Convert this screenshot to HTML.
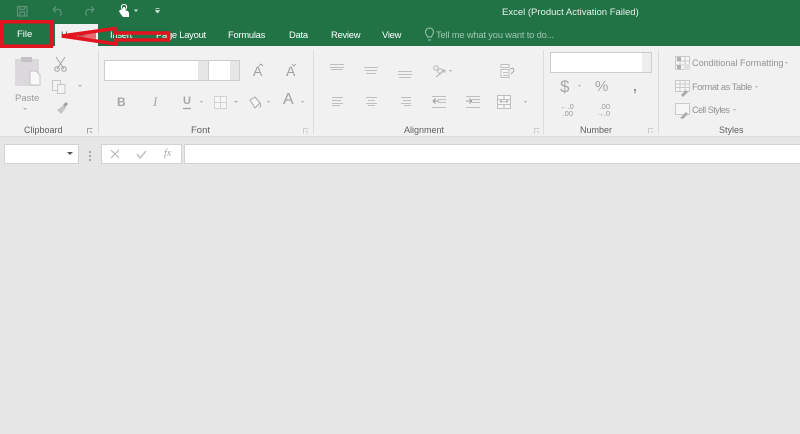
<!DOCTYPE html>
<html><head><meta charset="utf-8">
<style>
html,body{margin:0;padding:0;width:800px;height:434px;overflow:hidden;background:#e6e6e6;font-family:"Liberation Sans",sans-serif}
#p{position:absolute;left:0;top:0;width:800px;height:434px;filter:blur(.35px)}
.a{position:absolute}
.t{position:absolute;white-space:nowrap;font-size:9px;line-height:12px}
.w{color:#fff;font-size:9.400px;letter-spacing:-.25px}
.g{color:#5f5f5f;font-size:9px}
.s{color:#949494;font-size:9.100px}
.box{position:absolute;background:#fff;border:1px solid #cdcdcd;box-sizing:border-box}
</style></head>
<body>
<div id="p">
<div class="a" style="left:0;top:0;width:800px;height:46px;background:#217346"></div>
<div class="a" style="left:0;top:46px;width:800px;height:90px;background:#f1f1f1"></div>
<div class="a" style="left:55px;top:24px;width:43px;height:22px;background:#f1f1f1"></div>
<div class="a" style="left:0;top:136px;width:800px;height:1px;background:#dcdcdc"></div>

<div class="t" style="left:502px;top:7px;color:#e9f1ec;font-size:9.500px">Excel (Product Activation Failed)</div>
<div class="t w" style="left:17px;top:29px;font-size:9.500px;letter-spacing:0">File</div>
<div class="t" style="left:61px;top:29px;color:#217346;font-size:9.400px;letter-spacing:-.25px">Home</div>
<div class="t w" style="left:110px;top:29px">Insert</div>
<div class="t w" style="left:156px;top:29px">Page Layout</div>
<div class="t w" style="left:228px;top:29px">Formulas</div>
<div class="t w" style="left:289px;top:29px">Data</div>
<div class="t w" style="left:331px;top:29px">Review</div>
<div class="t w" style="left:382px;top:29px">View</div>
<div class="t" style="left:436px;top:29px;color:#a3c6b1;font-size:9.300px;letter-spacing:-.15px">Tell me what you want to do...</div>

<svg class="a" style="left:0;top:0" width="800" height="170" viewBox="0 0 800 170" fill="none">
 <g stroke="#5d9477" stroke-width="1.200">
  <rect x="17.500" y="6.500" width="9.500" height="9.500"/><path d="M20 6.500v3h4.500v-3M20 16v-4h4.500v4"/>
  <path d="M53 9.500l3-3M53 9.500l3 3M53 9.500h6a3.500 3.500 0 0 1 1 6"/>
  <path d="M94 9.500l-3-3M94 9.500l-3 3M94 9.500h-6a3.500 3.500 0 0 0-1 6"/>
 </g>
 <path d="M120 10l3-1V7h2v3l3 1 1 2v4h-6l-3-4-1-2z" fill="#fff"/>
 <circle cx="124" cy="7" r="2.600" stroke="#fff" stroke-width="1.100"/>
 <path d="M134 9.500h4l-2 2.500z" fill="#d7e6dd"/>
 <path d="M155.500 8.500h4M155.500 10.500h4l-2 2.500z" stroke="#d7e6dd" stroke-width=".7" fill="#d7e6dd"/>
 <path d="M428 40h3M427.500 37c0-1.500-2-2.500-2-5a4 4 0 0 1 8 0c0 2.500-2 3.500-2 5z" stroke="#a3c6b1"/>

 <g stroke="#dcdcdc"><path d="M98.500 50v84M313.500 50v84M543.500 50v84M658.500 50v84"/></g>
 <g stroke="#8f8f8f" stroke-width=".8"><path d="M87.500 133.500v-5h5M90 131l2 2"/></g>
 <g stroke="#c2c2c2" stroke-width=".8"><path d="M303.500 133.500v-5h5M306 131l2 2M534.500 133.500v-5h5M537 131l2 2M648.500 133.500v-5h5M651 131l2 2"/></g>

 <rect x="15" y="59" width="24" height="27" fill="#dbd9db"/>
 <rect x="21" y="57" width="11" height="5" fill="#c4c2c4"/>
 <path d="M30 71h6l4 4v10H30z" fill="#f8f8f8" stroke="#c4c4c4"/>
 <g stroke="#a8a8a8" stroke-width="1.100"><path d="M56 57l8 12M65 57l-8 12"/><circle cx="57" cy="69" r="2.300"/><circle cx="64" cy="69" r="2.300"/></g>
 <g stroke="#c6c6c6"><rect x="52.500" y="80.500" width="8" height="10" fill="#f4f4f4"/><rect x="57.500" y="84.500" width="7.500" height="9" fill="#f4f4f4"/></g>
 <path d="M78 85h4l-2 2z" fill="#b0b0b0"/><path d="M23 108h4l-2 2z" fill="#b0b0b0"/>
 <path d="M57 110l7-5 2 3-5 6z" fill="#c6c6c6"/><path d="M63 105l3-3 2 2-3 3z" fill="#a0a0a0"/>

 <path d="M204 70h5l-2.500 3zM235 70h4l-2 3zM200 101h3l-1.500 2zM234 101h4l-2 2zM267 101h3l-1.500 2zM301 101h3l-1.500 2z" fill="#b0b0b0"/>
 <path d="M259 66l2-2 2 2M292 64l2 2 2-2" stroke="#999" stroke-width=".8"/>
 <path d="M183 108.500h8" stroke="#a0a0a0" stroke-width="1.300"/>
 <rect x="214.500" y="96.500" width="12" height="12" stroke="#d2d2d2" fill="#f6f6f6"/><path d="M220.500 96v13M214 102.500h13" stroke="#d2d2d2"/>
 <path d="M250 100l5-3 5 6-5 5z" stroke="#aaa" fill="#f7f7f7"/><path d="M260 103c1 2 1 4-.5 4" stroke="#aaa"/>

 <g stroke="#bfbfbf" stroke-width="1">
  <path d="M330 64.500h14M330 67.500h14M331 69.500h12"/>
  <path d="M364 67.500h14M365 70.500h12M366 73.500h10"/>
  <path d="M398 71.500h14M398 74.500h14M399 77.500h12"/>
  <path d="M332 97.500h11M332 100.500h9M332 103.500h11M332 105.500h8"/>
  <path d="M366 97.500h11M368 100.500h7M366 103.500h11M368 105.500h7"/>
  <path d="M401 97.500h10M403 100.500h8M401 103.500h10M404 105.500h7"/>
  <path d="M432 96.500h14M438 99.500h8M438 102.500h8M432 107.500h14"/>
  <path d="M466 96.500h14M472 99.500h8M472 102.500h8M466 107.500h14"/>
  <rect x="497.500" y="95.500" width="13" height="13" fill="#f7f7f7"/><path d="M497 99.500h14M497 104.500h14M504 95v4M504 105v4"/>
  <path d="M501 64.500h8v3h-8zM501 69.500h8v8h-8z" fill="#f5f5f5"/><path d="M503 72.500h5M503 75.500h5"/>
 </g>
 <path d="M433 101h6M433 101l2.500-2.500M433 101l2.500 2.500" stroke="#999"/><path d="M472 101h-6M472 101l-2.500-2.500M472 101l-2.500 2.500" stroke="#999"/>
 <path d="M500 101.500h8M500 101.500l1.500-1.500M500 101.500l1.500 1.500M508 101.500l-1.500-1.500M508 101.500l-1.500 1.500" stroke="#aaa" stroke-width=".8"/>
 <path d="M449 70h3l-1.500 2zM524 101h3l-1.500 2z" fill="#b0b0b0"/>
 <path d="M510 69l3-1 1 3-3 3" stroke="#aaa"/>
 <path d="M436 77l9-7" stroke="#aaa"/><path d="M445 70l-3 0M445 70l0 3" stroke="#aaa" stroke-width=".8"/>
 <circle cx="436" cy="68" r="2.200" stroke="#b5b5b5"/><circle cx="440" cy="71" r="2.200" stroke="#b5b5b5"/>

 <path d="M578 85h3l-1.500 2z" fill="#b8b8b8"/>
 <g stroke="#c9c9c9">
  <rect x="675.500" y="56.500" width="14" height="13" fill="#f6f6f6"/><path d="M680 57v12M685 57v12M676 61h13M676 65h13"/>
  <rect x="675.500" y="80.500" width="14" height="11" fill="#f6f6f6"/><path d="M680 81v10M685 81v10M676 84h13M676 87.500h13"/>
  <rect x="675.500" y="103.500" width="14" height="11" fill="#f6f6f6"/>
 </g>
 <path d="M677 57h4v4h-4zM677 65h4v4h-4z" fill="#b0b0b0"/><path d="M684 64h6v6h-6z" fill="#e0e0e0"/>
 <path d="M681 95l5-5 2 2-5 5zM680 118l6-6 2 2-5 5z" fill="#aaa"/>
 <path d="M785 62h3l-1.500 2zM755 86h3l-1.500 2zM733 109h3l-1.500 2z" fill="#b8b8b8"/>

 <g fill="#a8a8a8"><rect x="89" y="151" width="2" height="2"/><rect x="89" y="155" width="2" height="2"/><rect x="89" y="159" width="2" height="2"/></g>
</svg>

<div class="t" style="left:15px;top:93px;font-size:9.500px;color:#9a9a9a">Paste</div>
<div class="t g" style="left:24px;top:124px">Clipboard</div>
<div class="t g" style="left:191px;top:125px;font-size:9.500px">Font</div>
<div class="t g" style="left:404px;top:124px">Alignment</div>
<div class="t g" style="left:580px;top:124px">Number</div>
<div class="t g" style="left:719px;top:124px">Styles</div>

<div class="box" style="left:104px;top:60px;width:105px;height:21px"></div>
<div class="a" style="left:198px;top:61px;width:10px;height:19px;background:#e6e6e6"></div>
<div class="box" style="left:208px;top:60px;width:32px;height:21px"></div>
<div class="a" style="left:230px;top:61px;width:9px;height:19px;background:#e6e6e6"></div>
<div class="box" style="left:550px;top:52px;width:102px;height:21px"></div>
<div class="a" style="left:642px;top:53px;width:9px;height:19px;background:#eeeeee"></div>

<div class="t" style="left:253px;top:65px;font-size:14px;color:#a0a0a0">A</div>
<div class="t" style="left:286px;top:65px;font-size:14px;color:#a0a0a0">A</div>
<div class="t" style="left:117px;top:96px;font-size:12px;font-weight:bold;color:#a6a6a6">B</div>
<div class="t" style="left:153px;top:96px;font-size:13px;font-style:italic;font-family:'Liberation Serif',serif;color:#a6a6a6">I</div>
<div class="t" style="left:183px;top:95px;font-size:11px;font-weight:bold;color:#a6a6a6">U</div>
<div class="t" style="left:283px;top:94px;font-size:16px;color:#a0a0a0">A</div>

<div class="t" style="left:560px;top:81px;font-size:17px;color:#a6a6a6">$</div>
<div class="t" style="left:595px;top:81px;font-size:15px;color:#a6a6a6">%</div>
<div class="t" style="left:633px;top:80px;font-size:14px;font-weight:bold;color:#909090">,</div>
<div class="t" style="left:560px;top:103px;font-size:7.500px;line-height:7px;color:#9a9a9a;text-align:right;width:13px">←.0<br>.00</div>
<div class="t" style="left:596px;top:103px;font-size:7.500px;line-height:7px;color:#9a9a9a;text-align:right;width:14px">.00<br>→.0</div>

<div class="t s" style="left:692px;top:57px">Conditional Formatting</div>
<div class="t s" style="left:692px;top:81px;letter-spacing:-.35px">Format as Table</div>
<div class="t s" style="left:692px;top:104px;letter-spacing:-.5px">Cell Styles</div>

<div class="box" style="left:4px;top:144px;width:75px;height:20px;border-color:#d2d2d2"></div>
<svg class="a" style="left:66px;top:150px" width="10" height="8"><path d="M1 2h6l-3 3z" fill="#555"/></svg>
<div class="box" style="left:101px;top:144px;width:81px;height:20px;border-color:#d2d2d2"></div>
<div class="box" style="left:184px;top:144px;width:616px;height:20px;border-color:#d2d2d2;border-right:0"></div>
<svg class="a" style="left:101px;top:144px" width="81" height="20" fill="none">
<path d="M10 6l8 8M18 6l-8 8" stroke="#b8b8b8" stroke-width="1.200"/>
<path d="M36 10l3 4 6-7" stroke="#c0c0c0" stroke-width="1.500"/>
</svg>
<div class="t" style="left:164px;top:148px;font-size:10px;font-style:italic;font-family:'Liberation Serif',serif;color:#a6a6a6">fx</div>

<svg class="a" style="left:0;top:0" width="800" height="60" fill="none">
 <rect x="1.750" y="21.750" width="49.500" height="24.500" stroke="#e3131f" stroke-width="3.500"/>
 <path d="M62 36L115 28.500V33H168.500V40H116V44z" stroke="#e3131f" stroke-width="3.500"/>
 <path d="M62 36L96 33V39z" fill="#e3131f" opacity=".6"/>
</svg>
</div>
</body></html>
